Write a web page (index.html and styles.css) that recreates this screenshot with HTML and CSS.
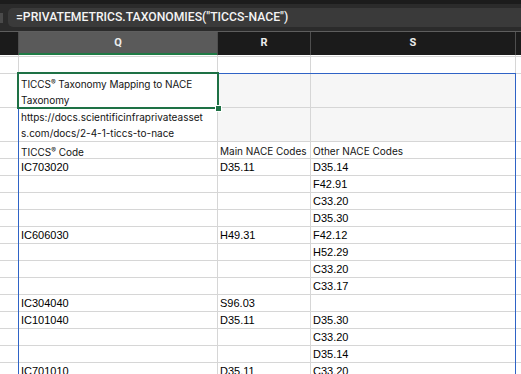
FILE: index.html
```html
<!DOCTYPE html>
<html lang="en">
<head>
  <meta charset="UTF-8" />
  <title>TICCS to NACE</title>
  <link rel="stylesheet" href="styles.css">
</head>
<body>
  <div class="app">
    <div class="topstrip"></div>
    <div class="formula-bar">
      <span class="fx-stub"></span>
      <div class="formula-input">=PRIVATEMETRICS.TAXONOMIES("TICCS-NACE")</div>
    </div>

    <div class="col-heads cols">
      <div class="col-head"></div>
      <div class="col-head active">Q</div>
      <div class="col-head">R</div>
      <div class="col-head">S</div>
      <div class="col-head"></div>
    </div>

    <div class="stack">
      <div class="sheet cols rows">
        <!-- partial row above -->
        <div class="cell"></div><div class="cell"></div><div class="cell"></div><div class="cell"></div><div class="cell"></div>
        <!-- empty row -->
        <div class="cell"></div><div class="cell"></div><div class="cell"></div><div class="cell"></div><div class="cell"></div>
        <!-- title -->
        <div class="cell"></div>
        <div class="cell tx title">TICCS<span class="reg">®</span> Taxonomy Mapping to NACE<br>Taxonomy</div>
        <div class="cell shade"></div><div class="cell shade"></div><div class="cell"></div>
        <!-- link -->
        <div class="cell"></div>
        <div class="cell tx">https://docs.scientificinfraprivateasset<br>s.com/docs/2-4-1-ticcs-to-nace</div>
        <div class="cell shade"></div><div class="cell shade"></div><div class="cell"></div>
        <!-- headings -->
        <div class="cell"></div>
        <div class="cell tx">TICCS<span class="reg">®</span> Code</div>
        <div class="cell tx">Main NACE Codes</div>
        <div class="cell tx">Other NACE Codes</div>
        <div class="cell"></div>
        <!-- data -->
        <div class="cell"></div><div class="cell">IC703020</div><div class="cell">D35.11</div><div class="cell">D35.14</div><div class="cell"></div>
        <div class="cell"></div><div class="cell"></div><div class="cell"></div><div class="cell">F42.91</div><div class="cell"></div>
        <div class="cell"></div><div class="cell"></div><div class="cell"></div><div class="cell">C33.20</div><div class="cell"></div>
        <div class="cell"></div><div class="cell"></div><div class="cell"></div><div class="cell">D35.30</div><div class="cell"></div>
        <div class="cell"></div><div class="cell">IC606030</div><div class="cell">H49.31</div><div class="cell">F42.12</div><div class="cell"></div>
        <div class="cell"></div><div class="cell"></div><div class="cell"></div><div class="cell">H52.29</div><div class="cell"></div>
        <div class="cell"></div><div class="cell"></div><div class="cell"></div><div class="cell">C33.20</div><div class="cell"></div>
        <div class="cell"></div><div class="cell"></div><div class="cell"></div><div class="cell">C33.17</div><div class="cell"></div>
        <div class="cell"></div><div class="cell">IC304040</div><div class="cell">S96.03</div><div class="cell"></div><div class="cell"></div>
        <div class="cell"></div><div class="cell">IC101040</div><div class="cell">D35.11</div><div class="cell">D35.30</div><div class="cell"></div>
        <div class="cell"></div><div class="cell"></div><div class="cell"></div><div class="cell">C33.20</div><div class="cell"></div>
        <div class="cell"></div><div class="cell"></div><div class="cell"></div><div class="cell">D35.14</div><div class="cell"></div>
        <div class="cell"></div><div class="cell">IC701010</div><div class="cell">D35.11</div><div class="cell">C33.20</div><div class="cell"></div>
      </div>

      <!-- selection outlines, same grid laid over the sheet -->
      <div class="overlay cols rows">
        <div class="range-sel"></div>
        <div class="active-cell"><span class="handle"></span></div>
      </div>
    </div>
  </div>
</body>
</html>
```

FILE: styles.css
```css
body {
  margin: 0;
  font-family: "Liberation Sans", Arial, sans-serif;
  background-color: #fff;
}
.app {
  width: 521px;
  height: 374px;
  overflow: hidden;
}
.topstrip {
  height: 4px;
  background-color: #1c1c1c;
}
.formula-bar {
  display: flex;
  align-items: center;
  box-sizing: border-box;
  height: 28px;
  padding: 4px 0;
  background-color: #2b2b2b;
  border-bottom: 1px solid #5e5e5e;
}
.fx-stub {
  width: 3px;
  height: 10px;
  margin-right: 5px;
  background-color: #4a4a4a;
}
.formula-input {
  flex: 1;
  height: 19px;
  line-height: 19px;
  padding-left: 8px;
  border-radius: 5px 0 0 5px;
  background-color: #3a3a3a;
  color: #f4f4f4;
  font-family: Roboto, "Liberation Sans", sans-serif;
  font-weight: 500;
  font-size: 12.2px;
  white-space: nowrap;
}
.cols {
  display: grid;
  grid-template-columns: 18px 198px 92px 204px 1fr;
  gap: 1px;
}
.rows {
  grid-template-rows: 1px 16px 33px 33px 16px repeat(13, 16px);
}
.col-heads {
  height: 23px;
  background-color: #4e4e4e;
}
.col-head {
  display: flex;
  align-items: center;
  justify-content: center;
  box-sizing: border-box;
  padding-bottom: 2px;
  background-color: #1b1b1b;
  color: #ececec;
  font-family: Roboto, "Liberation Sans", sans-serif;
  font-weight: bold;
  font-size: 11px;
}
.col-head.active {
  background-color: #5a5a5a;
  border-bottom: 2px solid #1f7a45;
  padding-bottom: 0;
}
.stack {
  display: grid;
}
.stack > * {
  grid-area: 1 / 1;
}
.sheet {
  background-color: #d6d6d6;
}
.overlay {
  pointer-events: none;
}
.cell {
  background-color: #fff;
  padding: 0 2px;
  font-size: 11px;
  line-height: 16px;
  color: #000;
  white-space: nowrap;
  overflow: hidden;
}
.cell.tx {
  font-family: Inter, "Liberation Sans", sans-serif;
  font-size: 10px;
  padding-top: 1px;
  color: #141414;
}
.cell.title {
  letter-spacing: -0.05px;
}
.cell.shade {
  background-color: #f6f6f6;
}
.reg {
  font-size: 7px;
  vertical-align: 3px;
}
.range-sel {
  grid-column: 2 / 5;
  grid-row: 3 / -1;
  margin: -1px;
  border: 1px solid #2f63c6;
}
.active-cell {
  position: relative;
  grid-column: 2;
  grid-row: 3;
  margin: -2px;
  border: 2px solid #1e7145;
}
.handle {
  position: absolute;
  right: -5px;
  bottom: -5px;
  width: 5px;
  height: 5px;
  background-color: #1e7145;
  border: 1px solid #fff;
}
```
